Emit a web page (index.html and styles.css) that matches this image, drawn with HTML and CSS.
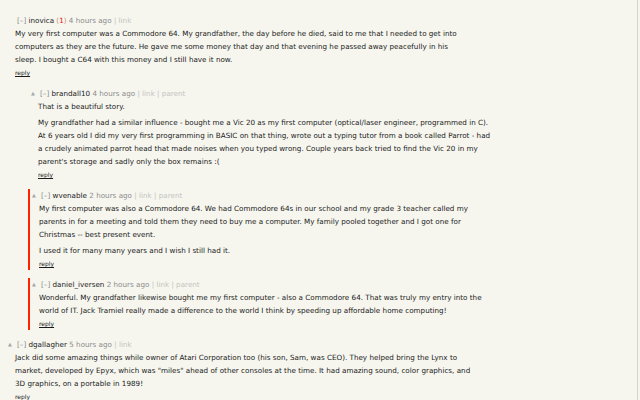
FILE: index.html
```html
<!DOCTYPE html>
<html>
<head>
<meta charset="utf-8">
<link rel="stylesheet" href="styles.css">
</head>
<body>
<div class="page">
  <div class="comment">
    <div class="head"><span class="vote"></span><span class="tog">[–]</span> <a class="user">inovica</a> <span class="new">(<span class="count">1</span>)</span> <span class="age">4 hours ago</span> <span class="links">| link</span></div>
    <div class="text">
      <p>My very first computer was a Commodore 64. My grandfather, the day before he died, said to me that I needed to get into<br>computers as they are the future. He gave me some money that day and that evening he passed away peacefully in his<br>sleep. I bought a C64 with this money and I still have it now.</p>
    </div>
    <div class="reply"><a>reply</a></div>
  </div>

  <div class="comment child">
    <div class="head"><span class="vote">▲</span><span class="tog">[–]</span> <a class="user">brandall10</a> <span class="age">4 hours ago</span> <span class="links">| link | parent</span></div>
    <div class="text">
      <p>That is a beautiful story.</p>
      <p>My grandfather had a similar influence - bought me a Vic 20 as my first computer (optical/laser engineer, programmed in C).<br>At 6 years old I did my very first programming in BASIC on that thing, wrote out a typing tutor from a book called Parrot - had<br>a crudely animated parrot head that made noises when you typed wrong. Couple years back tried to find the Vic 20 in my<br>parent's storage and sadly only the box remains :(</p>
    </div>
    <div class="reply"><a>reply</a></div>
  </div>

  <div class="comment child fresh">
    <div class="head"><span class="vote">▲</span><span class="tog">[–]</span> <a class="user">wvenable</a> <span class="age">2 hours ago</span> <span class="links">| link | parent</span></div>
    <div class="text">
      <p>My first computer was also a Commodore 64. We had Commodore 64s in our school and my grade 3 teacher called my<br>parents in for a meeting and told them they need to buy me a computer. My family pooled together and I got one for<br>Christmas -- best present event.</p>
      <p>I used it for many many years and I wish I still had it.</p>
    </div>
    <div class="reply"><a>reply</a></div>
  </div>

  <div class="comment child fresh">
    <div class="head"><span class="vote">▲</span><span class="tog">[–]</span> <a class="user">daniel_iversen</a> <span class="age">2 hours ago</span> <span class="links">| link | parent</span></div>
    <div class="text">
      <p>Wonderful. My grandfather likewise bought me my first computer - also a Commodore 64. That was truly my entry into the<br>world of IT. Jack Tramiel really made a difference to the world I think by speeding up affordable home computing!</p>
    </div>
    <div class="reply"><a>reply</a></div>
  </div>

  <div class="comment">
    <div class="head"><span class="vote">▲</span><span class="tog">[–]</span> <a class="user">dgallagher</a> <span class="age">5 hours ago</span> <span class="links">| link</span></div>
    <div class="text">
      <p>Jack did some amazing things while owner of Atari Corporation too (his son, Sam, was CEO). They helped bring the Lynx to<br>market, developed by Epyx, which was "miles" ahead of other consoles at the time. It had amazing sound, color graphics, and<br>3D graphics, on a portable in 1989!</p>
    </div>
    <div class="reply"><a>reply</a></div>
  </div>
</div>
</body>
</html>
```

FILE: styles.css
```css
html, body {
  margin: 0;
  padding: 0;
  background: #f6f6ef;
}

.page {
  box-sizing: border-box;
  width: 638px;
  min-height: 400px;
  border-right: 1px solid #d4d4cc;
  padding: 14px 0 0 15px;
  font-family: "DejaVu Sans", Verdana, sans-serif;
  font-size: 7.2px;
  line-height: 13px;
  color: #1a1a1a;
}

.comment {
  margin-bottom: 8px;
}

.comment.child {
  margin-left: 23px;
}

.comment.child.fresh {
  margin-left: 13px;
  padding-left: 9px;
  border-left: 2px solid #ff2200;
}

.head {
  margin-left: -7px;
  color: #828282;
  white-space: nowrap;
}

.vote {
  display: inline-block;
  width: 9px;
  font-size: 5px;
  color: #a8a8a8;
  vertical-align: top;
}

.tog {
  color: #8a8a8a;
}

.user {
  color: #222;
}

.new {
  color: #c98a7a;
}

.count {
  color: #e0200a;
}

.age {
  color: #8c8c8c;
}

.links {
  color: #c4c4c0;
}

.text {
  width: 480px;
}

.text p {
  margin: 0;
  white-space: nowrap;
}

.text p + p {
  margin-top: 3px;
}

.reply {
  font-size: 6px;
}

.reply a {
  color: #1a1a1a;
  text-decoration: underline;
}
```
